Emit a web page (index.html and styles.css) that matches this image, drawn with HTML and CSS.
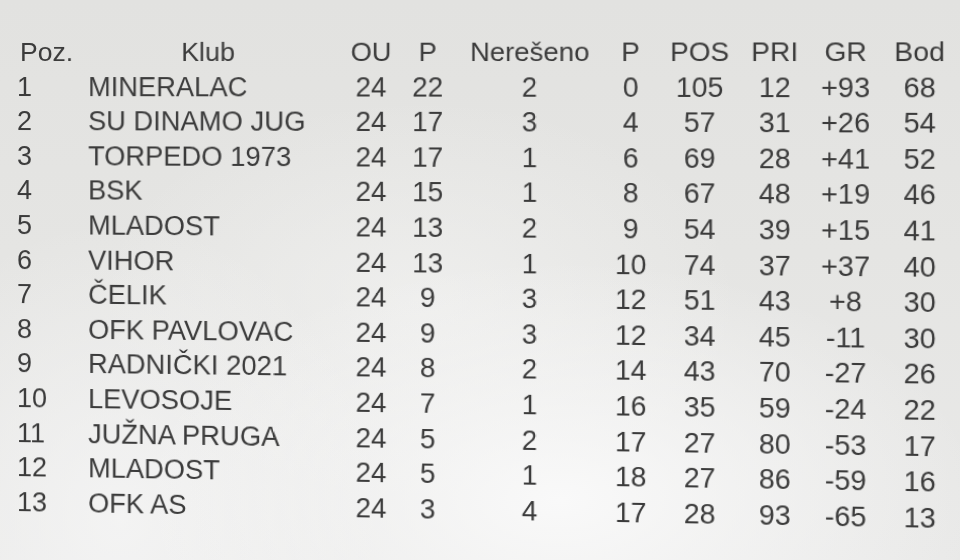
FILE: index.html
```html
<!DOCTYPE html>
<html lang="sr">
<head>
<meta charset="utf-8">
<title>Tabela</title>
<link rel="stylesheet" href="styles.css">
</head>
<body>
<div class="sheet">
  <div class="table">
    <div class="row head">
      <span class="c pos poz">Poz.</span><span class="c club club-head">Klub</span><span class="c">OU</span><span class="c">P</span><span class="c">Nerešeno</span><span class="c">P</span><span class="c">POS</span><span class="c">PRI</span><span class="c">GR</span><span class="c">Bod</span>
    </div>
    <div class="row"><span class="c pos">1</span><span class="c club">MINERALAC</span><span class="c">24</span><span class="c">22</span><span class="c">2</span><span class="c">0</span><span class="c">105</span><span class="c">12</span><span class="c">+93</span><span class="c">68</span></div>
    <div class="row"><span class="c pos">2</span><span class="c club">SU DINAMO JUG</span><span class="c">24</span><span class="c">17</span><span class="c">3</span><span class="c">4</span><span class="c">57</span><span class="c">31</span><span class="c">+26</span><span class="c">54</span></div>
    <div class="row"><span class="c pos">3</span><span class="c club">TORPEDO 1973</span><span class="c">24</span><span class="c">17</span><span class="c">1</span><span class="c">6</span><span class="c">69</span><span class="c">28</span><span class="c">+41</span><span class="c">52</span></div>
    <div class="row"><span class="c pos">4</span><span class="c club">BSK</span><span class="c">24</span><span class="c">15</span><span class="c">1</span><span class="c">8</span><span class="c">67</span><span class="c">48</span><span class="c">+19</span><span class="c">46</span></div>
    <div class="row"><span class="c pos">5</span><span class="c club">MLADOST</span><span class="c">24</span><span class="c">13</span><span class="c">2</span><span class="c">9</span><span class="c">54</span><span class="c">39</span><span class="c">+15</span><span class="c">41</span></div>
    <div class="row"><span class="c pos">6</span><span class="c club">VIHOR</span><span class="c">24</span><span class="c">13</span><span class="c">1</span><span class="c">10</span><span class="c">74</span><span class="c">37</span><span class="c">+37</span><span class="c">40</span></div>
    <div class="row"><span class="c pos">7</span><span class="c club">ČELIK</span><span class="c">24</span><span class="c">9</span><span class="c">3</span><span class="c">12</span><span class="c">51</span><span class="c">43</span><span class="c">+8</span><span class="c">30</span></div>
    <div class="row"><span class="c pos">8</span><span class="c club">OFK PAVLOVAC</span><span class="c">24</span><span class="c">9</span><span class="c">3</span><span class="c">12</span><span class="c">34</span><span class="c">45</span><span class="c">-11</span><span class="c">30</span></div>
    <div class="row"><span class="c pos">9</span><span class="c club">RADNIČKI 2021</span><span class="c">24</span><span class="c">8</span><span class="c">2</span><span class="c">14</span><span class="c">43</span><span class="c">70</span><span class="c">-27</span><span class="c">26</span></div>
    <div class="row"><span class="c pos">10</span><span class="c club">LEVOSOJE</span><span class="c">24</span><span class="c">7</span><span class="c">1</span><span class="c">16</span><span class="c">35</span><span class="c">59</span><span class="c">-24</span><span class="c">22</span></div>
    <div class="row"><span class="c pos">11</span><span class="c club">JUŽNA PRUGA</span><span class="c">24</span><span class="c">5</span><span class="c">2</span><span class="c">17</span><span class="c">27</span><span class="c">80</span><span class="c">-53</span><span class="c">17</span></div>
    <div class="row"><span class="c pos">12</span><span class="c club">MLADOST</span><span class="c">24</span><span class="c">5</span><span class="c">1</span><span class="c">18</span><span class="c">27</span><span class="c">86</span><span class="c">-59</span><span class="c">16</span></div>
    <div class="row"><span class="c pos">13</span><span class="c club">OFK AS</span><span class="c">24</span><span class="c">3</span><span class="c">4</span><span class="c">17</span><span class="c">28</span><span class="c">93</span><span class="c">-65</span><span class="c">13</span></div>
  </div>
</div>
</body>
</html>
```
FILE: styles.css
```css
html, body {
  margin: 0;
  padding: 0;
}
body {
  width: 960px;
  height: 560px;
  overflow: hidden;
  font-family: "Liberation Sans", Arial, sans-serif;
  color: #3b3b3b;
  background:
    radial-gradient(ellipse 420px 240px at 560px 500px, rgba(250,250,250,0.95), rgba(250,250,250,0) 100%),
    radial-gradient(ellipse 260px 300px at 120px 520px, rgba(246,246,246,0.8), rgba(246,246,246,0) 100%),
    radial-gradient(ellipse 320px 200px at 420px 300px, rgba(244,244,243,0.6), rgba(244,244,243,0) 100%),
    linear-gradient(180deg, #e2e2e0 0%, #e5e5e3 45%, #e9e9e8 100%);
}
.sheet {
  height: 560px;
  box-sizing: border-box;
  padding: 35px 0 0 16px;
}
.table {
  display: flex;
  flex-direction: column;
  transform-origin: 0 25px;
  transform: perspective(1000px) rotateY(-2.32deg);
}
.row {
  display: grid;
  grid-template-columns: 72px 246px 64.6px 45.4px 151.2px 42px 89.2px 52.6px 80.6px 57.8px;
  height: 34.6px;
  line-height: 34.6px;
  font-size: 27px;
  white-space: nowrap;
}
.head {
  font-size: 26.5px;
}
.c {
  display: flex;
  justify-content: center;
}
.pos {
  justify-content: flex-start;
  padding-left: 1px;
}
.poz {
  padding-left: 4px;
}
.club {
  justify-content: flex-start;
}
.club-head {
  justify-content: center;
  padding-right: 8.6px;
}
```
